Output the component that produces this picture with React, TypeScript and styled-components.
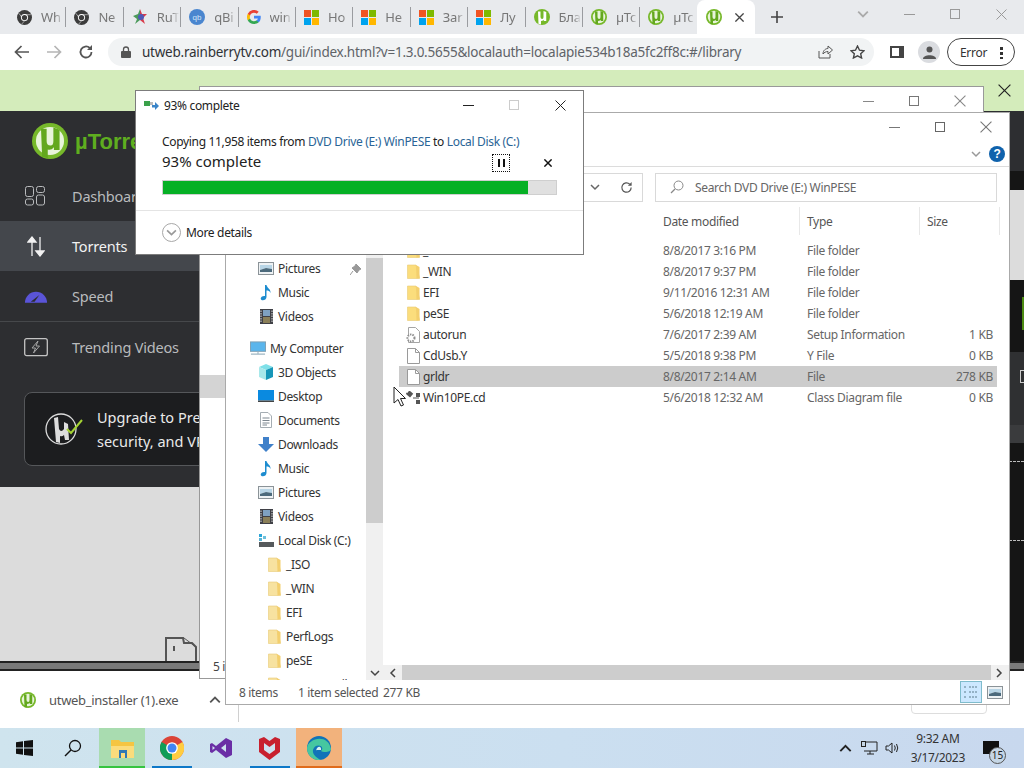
import styled, { createGlobalStyle } from 'styled-components';
import React from 'react';

const GlobalStyle = createGlobalStyle`
  html, body { margin: 0; padding: 0; background: #fff; overflow: hidden; }
  * { box-sizing: border-box; }
`;

// ---- small drawings ----

const Chrome = ({ size = 16 }: { size?: number }) => (
  <svg width={size} height={size} viewBox="0 0 16 16">
    <circle cx="8" cy="8" r="8" fill="#db4437" />
    <path d="M8 8 L15 4 A8 8 0 0 1 8 16 Z" fill="#ffcd40" />
    <path d="M8 8 L8 16 A8 8 0 0 1 1.070 4 Z" fill="#0f9d58" />
    <circle cx="8" cy="8" r="3.900" fill="#fff" />
    <circle cx="8" cy="8" r="3" fill="#4285f4" />
  </svg>
);

const GreyChrome = () => (
  <svg width="15" height="15" viewBox="0 0 16 16">
    <circle cx="8" cy="8" r="8" fill="#3c3c3c" />
    <path d="M2 3.500 L6 9 M14.800 5 H8 M5 15 L9.500 10" stroke="#aaa" strokeWidth="1" />
    <circle cx="8" cy="8" r="3.800" fill="#fff" />
    <circle cx="8" cy="8" r="2.800" fill="#3c3c3c" />
  </svg>
);

const Ms = () => (
  <svg width="15" height="15" viewBox="0 0 15 15">
    <rect width="7" height="7" fill="#f05423" />
    <rect x="8" width="7" height="7" fill="#7eb900" />
    <rect y="8" width="7" height="7" fill="#00a3ee" />
    <rect x="8" y="8" width="7" height="7" fill="#ffb700" />
  </svg>
);

const Rutor = () => (
  <svg width="16" height="16" viewBox="0 0 16 16">
    <path d="M8 0 L10 5 L15 5 L11 9 L13 15 L8 11 Z" fill="#d83a4a" />
    <path d="M8 0 L6 5 L1 7 L5 10 L3 15 L8 11 Z" fill="#4b9a5a" />
    <circle cx="9" cy="8" r="3" fill="#5058b8" />
  </svg>
);

const Qb = () => (
  <svg width="16" height="16" viewBox="0 0 16 16">
    <circle cx="8" cy="8" r="8" fill="#4a86cf" />
    <text x="8" y="11" fontSize="8" fontFamily="Liberation Sans" textAnchor="middle" fill="#d5e6f8">qb</text>
  </svg>
);

const Google = () => (
  <svg width="14" height="14" viewBox="0 0 16 16">
    <path d="M15.700 8.200c0-.6 0-1.100-.1-1.600H8v3h4.400a3.700 3.700 0 0 1-1.700 2.500v2h2.600c1.600-1.400 2.400-3.500 2.400-5.900z" fill="#4285f4" />
    <path d="M8 16c2.200 0 4-.7 5.300-1.900l-2.600-2a4.800 4.800 0 0 1-7.200-2.500H.9v2.100A8 8 0 0 0 8 16z" fill="#34a853" />
    <path d="M3.500 9.600a4.800 4.800 0 0 1 0-3.100V4.300H.9a8 8 0 0 0 0 7.400z" fill="#fbbc05" />
    <path d="M8 3.200c1.200 0 2.300.4 3.100 1.200l2.300-2.300A8 8 0 0 0 .9 4.300l2.600 2.100A4.800 4.800 0 0 1 8 3.200z" fill="#ea4335" />
  </svg>
);

const Utorrent = ({ size = 16, solid = false }: { size?: number; solid?: boolean }) => (
  <svg width={size} height={size} viewBox="0 0 32 32">
    <circle cx="16" cy="16" r="16" fill="#76b82a" />
    <circle cx="16" cy="16" r="12.500" fill={solid ? '#76b82a' : '#e8f4da'} />
    <path
      d="M8 5 L13 5 L13 16 Q13 20 16.500 20 Q19 20 19 16 L19 4 L24.500 6 L24.500 24 L19.500 24 L19.500 21.500 Q17 24.500 14 23.500 L14 31 L9 30 Z"
      fill={solid ? '#fff' : '#63a81e'}
    />
  </svg>
);

const Folder = ({ pale = false }: { pale?: boolean }) => (
  <svg width="13" height="15" viewBox="0 0 13 15">
    <path d="M0.500 1 H9 L12.500 13.500 V14.500 H0.500 Z" fill={pale ? '#f7e2a0' : '#fbdd7c'} stroke="#eacb76" strokeWidth="0.6" />
    <path d="M9 1 L12.500 3 V14 L9.500 14.500 Z" fill="#f3cf6e" />
  </svg>
);

const DocFile = () => (
  <svg width="13" height="16" viewBox="0 0 13 16">
    <path d="M0.500 0.500 H8.500 L12.500 4.500 V15.500 H0.500 Z" fill="#fff" stroke="#9a9a9a" />
    <path d="M8.500 0.500 V4.500 H12.500" fill="none" stroke="#9a9a9a" />
  </svg>
);

const SetupFile = () => (
  <svg width="16" height="16" viewBox="0 0 16 16">
    <path d="M3.500 0.500 H10.500 L14.500 4.500 V15.500 H3.500 Z" fill="#fff" stroke="#a5a5a5" />
    <circle cx="6" cy="11" r="3.500" fill="#fff" stroke="#8f8f8f" strokeWidth="2" strokeDasharray="1.500 1" />
  </svg>
);

const ClassFile = () => (
  <svg width="20" height="14" viewBox="0 0 20 14">
    <path d="M3 2 L8 5 M10 7 H16" stroke="#555" strokeWidth="1" />
    <rect x="4" y="0" width="5" height="5" fill="#555" transform="rotate(40 6 3)" />
    <rect x="13" y="2" width="4" height="4" fill="#555" />
    <rect x="13" y="9" width="4" height="4" fill="#555" />
  </svg>
);

const PicturesIcon = () => (
  <svg width="16" height="13" viewBox="0 0 16 13">
    <rect x="0.500" y="0.500" width="15" height="12" fill="#eef2f4" stroke="#8b9398" />
    <path d="M2 3 H14 V7 L8 6 L2 8 Z" fill="#b8d5e6" />
    <path d="M2 8 L8 6 L14 7 V10 H2 Z" fill="#4c6a7c" />
  </svg>
);

const MusicIcon = () => (
  <svg width="12" height="17" viewBox="0 0 12 17">
    <path d="M5 1 H6.500 C7 4 11 5 10.500 9 C10 7 8 6.500 6.500 6.500 V13 C6.500 15.500 3.500 17 1.500 16 C-.5 14.500 1.500 11.500 5 12 Z" fill="#1d8ccf" />
  </svg>
);

const VideosIcon = () => (
  <svg width="13" height="15" viewBox="0 0 13 15">
    <rect width="13" height="15" fill="#3f4046" />
    <rect x="3" y="1" width="7" height="6" fill="#7fa1c0" />
    <rect x="3" y="8" width="7" height="6" fill="#8a7f58" />
    <path d="M1 1.500 V14 M12 1.500 V14" stroke="#ddd" strokeDasharray="1.500 1" />
  </svg>
);

const ComputerIcon = () => (
  <svg width="17" height="15" viewBox="0 0 17 15">
    <rect x="0.500" y="0.500" width="16" height="10" fill="#5ab5ec" stroke="#7f9fb2" />
    <path d="M1 13.500 H16 M8.500 11 V13" stroke="#9fb7c4" strokeWidth="1.200" />
  </svg>
);

const CubeIcon = () => (
  <svg width="16" height="16" viewBox="0 0 16 16">
    <path d="M8 0 L15 3 L8 6 L1 3 Z" fill="#7fe0e8" />
    <path d="M1 3 L8 6 V16 L1 13 Z" fill="#a8e8ea" />
    <path d="M15 3 L8 6 V16 L15 13 Z" fill="#1796b8" />
  </svg>
);

const DesktopIcon = () => (
  <svg width="16" height="12" viewBox="0 0 16 12">
    <rect width="16" height="10.500" fill="#0a8ae0" />
    <rect y="10.500" width="16" height="1.500" fill="#444" />
  </svg>
);

const DocsIcon = () => (
  <svg width="12" height="16" viewBox="0 0 12 16">
    <path d="M.5 .5 H8 L11.500 4 V15.500 H.5 Z" fill="#fff" stroke="#a5adb3" />
    <path d="M2.500 6 H9.500 M2.500 8.500 H9.500 M2.500 11 H9.500 M2.500 13 H7" stroke="#7d8790" />
  </svg>
);

const DownIcon = () => (
  <svg width="16" height="15" viewBox="0 0 16 15">
    <path d="M5 0 H11 V7 H16 L8 15 L0 7 H5 Z" fill="#3f80c9" />
  </svg>
);

const DiskIcon = () => (
  <svg width="16" height="13" viewBox="0 0 16 13">
    <rect x="1" y="8" width="15" height="5" fill="#55595c" />
    <rect x="1" y="0" width="3" height="3" fill="#2ca6d8" />
    <rect x="5" y="2" width="3" height="3" fill="#6cc0dc" />
    <rect x="1" y="4" width="3" height="3" fill="#56b4d6" />
  </svg>
);

const CloseX = ({ size = 11, color = '#333', width = 1 }: { size?: number; color?: string; width?: number }) => (
  <svg width={size} height={size} viewBox="0 0 11 11">
    <path d="M.5 .5 L10.500 10.500 M10.500 .5 L.5 10.500" stroke={color} strokeWidth={width} />
  </svg>
);

const Chevron = ({ dir, color = '#444', size = 10 }: { dir: 'up' | 'down' | 'left' | 'right'; color?: string; size?: number }) => {
  const d = { up: 'M1 7 L5 3 L9 7', down: 'M1 3 L5 7 L9 3', left: 'M7 1 L3 5 L7 9', right: 'M3 1 L7 5 L3 9' }[dir];
  return (
    <svg width={size} height={size} viewBox="0 0 10 10">
      <path d={d} fill="none" stroke={color} strokeWidth="1.500" />
    </svg>
  );
};

const MinLine = styled.span<{ $color?: string }>`
  display: block;
  width: 11px;
  height: 1px;
  background: ${p => p.$color || '#333'};
`;

const MaxBox = styled.span<{ $color?: string }>`
  display: block;
  width: 10px;
  height: 10px;
  border: 1px solid ${p => p.$color || '#555'};
`;

// ---- browser chrome ----

const Screen = styled.div`
  position: relative;
  width: 1024px;
  height: 768px;
  display: flex;
  flex-direction: column;
  overflow: hidden;
  font-family: 'Noto Sans', 'Open Sans', sans-serif;
  color: #222;
`;

const TabStrip = styled.div`
  flex: none;
  height: 34px;
  background: #e8eaed;
  display: flex;
  align-items: stretch;
  padding-left: 9px;
`;

const Tab = styled.div<{ $active?: boolean }>`
  flex: none;
  width: ${p => (p.$active ? 58 : 56.4)}px;
  height: 34px;
  display: flex;
  align-items: center;
  gap: ${p => (p.$active ? 13 : 9)}px;
  padding-left: ${p => (p.$active ? 9 : 8)}px;
  font-size: 13px;
  color: #777;
  overflow: hidden;
  white-space: nowrap;
  background: ${p => (p.$active ? '#fff' : 'transparent')};
  border-radius: ${p => (p.$active ? '8px 8px 0 0' : '0')};
`;

const TabLabel = styled.span`
  width: 22px;
  overflow: hidden;
  letter-spacing: -0.2px;
  -webkit-mask-image: linear-gradient(90deg, #000 65%, transparent);
  mask-image: linear-gradient(90deg, #000 65%, transparent);
`;

const TabDivider = styled.i`
  flex: none;
  width: 1px;
  height: 20px;
  margin-top: 7px;
  background: #9a9ca0;
`;

const NewTab = styled.div`
  width: 32px;
  margin-left: 6px;
  display: flex;
  align-items: center;
  justify-content: center;
`;

const WinControls = styled.div`
  margin-left: auto;
  display: flex;
  height: 28px;
`;

const WinBtn = styled.div`
  width: 46px;
  display: flex;
  align-items: center;
  justify-content: center;
`;

const AddressRow = styled.div`
  flex: none;
  height: 36px;
  background: #fff;
  display: flex;
  align-items: center;
  padding-left: 14px;
`;

const NavBtns = styled.div`
  display: flex;
  align-items: center;
  gap: 16px;
  margin-right: 14px;
`;

const Omnibox = styled.div`
  flex: none;
  width: 766px;
  height: 28px;
  border-radius: 14px;
  background: #f1f3f4;
  display: flex;
  align-items: center;
  padding: 0 9px 0 13px;
  font-size: 13.5px;
  letter-spacing: -0.24px;
  color: #5f6368;
  white-space: nowrap;
  b { font-weight: 400; color: #303236; }
`;

const LockWrap = styled.span`
  display: flex;
  margin-right: 11px;
`;

const OmniIcons = styled.div`
  margin-left: auto;
  display: flex;
  gap: 17px;
  align-items: center;
`;

const SideIcons = styled.div`
  display: flex;
  align-items: center;
  margin-left: 16px;
  gap: 14px;
`;

const Avatar = styled.div`
  width: 22px;
  height: 22px;
  border-radius: 50%;
  background: #dadce0;
  display: flex;
  align-items: center;
  justify-content: center;
`;

const ErrorPill = styled.div`
  width: 68px;
  height: 28px;
  margin-left: -7px;
  border: 1px solid #444;
  border-radius: 14px;
  font-size: 12px;
  letter-spacing: -0.3px;
  color: #333;
  display: flex;
  align-items: center;
  justify-content: space-between;
  padding: 0 11px 0 12px;
`;

const Kebab = styled.span`
  width: 3px;
  height: 13px;
  background: radial-gradient(circle, #333 1.5px, transparent 1.7px) 0 0 / 3px 5px repeat-y;
`;

// ---- web page behind the windows ----

const Page = styled.div`
  flex: 1;
  min-height: 0;
  display: flex;
  flex-direction: column;
`;

const Banner = styled.div`
  flex: none;
  height: 41px;
  background: #d4ecbb;
  display: flex;
  align-items: center;
  padding: 0 13px 0 226px;
  font-size: 14.5px;
  color: #222;
  white-space: nowrap;
  gap: 10px;
  b { font-weight: 700; }
`;

const BannerClose = styled.span`
  margin-left: auto;
  display: flex;
`;

const PageBody = styled.div`
  flex: 1;
  min-height: 0;
  display: flex;
`;

const LeftCol = styled.div`
  flex: 1;
  min-width: 0;
  display: flex;
  flex-direction: column;
`;

const AppBody = styled.div`
  flex: none;
  height: 376px;
  background: #2d2e31;
  display: flex;
  flex-direction: column;
`;

const LeftBottom = styled.div`
  flex: 1;
  background: #dcdcdc;
  display: flex;
  align-items: flex-end;
  padding-left: 165px;
`;

const RightStrip = styled.div`
  flex: none;
  width: 40px;
  display: flex;
  flex-direction: column;
`;

const Band = styled.div<{ $h?: number; $bg: string }>`
  position: relative;
  flex: ${p => (p.$h ? `none` : '1')};
  height: ${p => (p.$h ? `${p.$h}px` : 'auto')};
  background: ${p => p.$bg};
`;

const GreenMark = styled.span`
  position: absolute;
  left: 38px;
  top: 17px;
  width: 2px;
  height: 33px;
  background: #4c8a12;
`;

const SquareMark = styled.span`
  position: absolute;
  left: 36px;
  top: 18px;
  width: 6px;
  height: 13px;
  border: 1px solid #ccc;
`;

const DashMark = styled.span<{ $top: number }>`
  position: absolute;
  left: 25px;
  right: 0;
  top: ${p => p.$top}px;
  border-top: 1px dashed #bbb;
`;

const Brand = styled.div`
  height: 60px;
  padding: 12px 0 0 32px;
  display: flex;
  align-items: flex-start;
  gap: 7px;
  font-family: 'Liberation Sans', sans-serif;
  font-weight: 700;
  font-size: 22px;
  color: #5fae1f;
  line-height: 37px;
`;

const NavItem = styled.div<{ $active?: boolean; $rule?: boolean }>`
  flex: none;
  height: ${p => (p.$rule ? 51 : 50)}px;
  display: flex;
  align-items: center;
  padding-left: 24px;
  gap: 24px;
  font-size: 14.5px;
  letter-spacing: -0.2px;
  color: ${p => (p.$active ? '#f2f2f2' : '#b9bbbd')};
  background: ${p => (p.$active ? '#44474c' : 'transparent')};
  border-bottom: ${p => (p.$rule ? '1px solid #46484b' : 'none')};
  white-space: nowrap;
`;

const NavIcon = styled.span`
  width: 24px;
  display: flex;
  justify-content: center;
`;

const Upsell = styled.div`
  margin: 20px 0 0 24px;
  height: 74px;
  width: 300px;
  background: #1c1d1f;
  border: 1px solid #55575a;
  border-radius: 8px;
  display: flex;
  align-items: center;
  gap: 14px;
  padding: 0 0 1px 20px;
  font-size: 14.5px;
  line-height: 24px;
  color: #eaeaea;
  white-space: nowrap;
`;

const HScroll = styled.div`
  flex: none;
  height: 10px;
  background: #7a7a7a;
  border-top: 2px solid #222;
  border-bottom: 2px solid #222;
`;

const DownloadBar = styled.div`
  flex: none;
  height: 57px;
  background: #fff;
  display: flex;
  align-items: center;
  padding-left: 20px;
  font-size: 13px;
  letter-spacing: -0.3px;
  color: #555;
`;

const DlIcon = styled.span`
  display: flex;
  margin-right: 13px;
`;

const DlChevron = styled.span`
  display: flex;
  margin-left: 31px;
`;

const DlRule = styled.i`
  align-self: stretch;
  width: 1px;
  margin: 0 0 6px 17px;
  background: #d0d0d0;
`;

const ShowAll = styled.div`
  margin-left: auto;
  margin-right: 37px;
  width: 76px;
  height: 28px;
  border: 1px solid #ddd;
  border-radius: 4px;
`;

// ---- taskbar ----

const Taskbar = styled.div`
  flex: none;
  height: 40px;
  background: linear-gradient(90deg, #cfe4ee, #cbdff0 55%, #c8d8ee);
  display: flex;
  align-items: stretch;
  padding-left: 1px;
  gap: 3.2px;
`;

const TaskBtn = styled.div<{ $bg?: string; $under?: string; $inset?: number }>`
  position: relative;
  width: 46px;
  display: flex;
  align-items: center;
  justify-content: center;
  background: ${p => p.$bg || 'transparent'};
  &::after {
    content: '';
    position: absolute;
    left: ${p => p.$inset || 0}px;
    right: ${p => p.$inset || 0}px;
    bottom: 0;
    height: 2px;
    background: ${p => p.$under || 'transparent'};
  }
`;

const Tray = styled.div`
  margin-left: auto;
  display: flex;
  align-items: center;
  padding-right: 25px;
`;

const TrayIcon = styled.span<{ $gap: number }>`
  display: flex;
  margin-right: ${p => p.$gap}px;
`;

const Clock = styled.div`
  font-size: 12px;
  letter-spacing: -0.3px;
  line-height: 19px;
  text-align: center;
  color: #333;
  margin: 0 18px 0 11px;
  white-space: nowrap;
`;

const Notify = styled.div`
  position: relative;
  width: 16px;
  height: 13px;
  margin-bottom: 2px;
  background: #111;
  span {
    position: absolute;
    left: 6px;
    top: 6px;
    width: 17px;
    height: 17px;
    border-radius: 50%;
    border: 1px solid #555;
    background: #c5d6e6;
    font-size: 10px;
    line-height: 15px;
    text-align: center;
    color: #222;
  }
`;

// ---- windows ----

const Win = styled.div<{ $l: number; $t: number; $w: number; $h: number; $z: number; $line?: string }>`
  position: absolute;
  left: ${p => p.$l}px;
  top: ${p => p.$t}px;
  width: ${p => p.$w}px;
  height: ${p => p.$h}px;
  z-index: ${p => p.$z};
  background: #fff;
  border: 1px solid ${p => p.$line || '#7c7c7c'};
  display: flex;
  flex-direction: column;
  letter-spacing: -0.33px;
`;

const TitleBar = styled.div<{ $h: number }>`
  flex: none;
  height: ${p => p.$h}px;
  display: flex;
  align-items: center;
  padding-left: 8px;
  font-size: 12px;
  gap: 5px;
`;

const TitleBtns = styled.div`
  margin-left: auto;
  display: flex;
`;

const TitleBtn = styled.div`
  width: 46px;
  display: flex;
  align-items: center;
  justify-content: center;
`;

const BackSelected = styled.div`
  flex: none;
  height: 23px;
  margin-top: 260px;
  background: #d4d4d4;
`;

const BackFoot = styled.div`
  margin-top: auto;
  font-size: 12px;
  color: #444;
  padding: 0 0 3px 13px;
`;

const CopyBody = styled.div`
  flex: none;
  padding: 3px 26px 0;
  height: 92px;
  border-bottom: 1px solid #e4e4e4;
`;

const CopyLine = styled.div`
  font-size: 12px;
  line-height: 17px;
  margin-top: 11px;
  color: #222;
  white-space: nowrap;
  a { color: #2a6496; }
`;

const CopyHead = styled.div`
  display: flex;
  align-items: center;
  height: 22px;
  margin-top: 2px;
  padding-right: 5px;
  letter-spacing: 0;
`;

const CopyPct = styled.span`
  align-self: flex-start;
  font-size: 15px;
  line-height: 18px;
  color: #222;
`;

const PauseBtn = styled.div`
  margin-left: auto;
  width: 18px;
  height: 18px;
  border: 1px dotted #111;
  display: flex;
  align-items: center;
  justify-content: center;
  gap: 3px;
  margin-right: 34px;
  i { width: 2px; height: 8px; background: #111; }
`;

const Progress = styled.div`
  margin-top: 6px;
  height: 15px;
  width: 395px;
  background: #e0e0e0;
  border: 1px solid #cfcfcf;
`;

const ProgressFill = styled.div`
  height: 100%;
  background: #06b025;
`;

const Details = styled.div`
  flex: 1;
  display: flex;
  align-items: center;
  gap: 5px;
  padding-left: 26px;
  font-size: 12px;
  color: #222;
`;

const ChevronRound = styled.span`
  width: 19px;
  height: 19px;
  border-radius: 50%;
  border: 1px solid #a8a8a8;
  display: flex;
  align-items: center;
  justify-content: center;
`;

// explorer

const Ribbon = styled.div`
  flex: none;
  height: 26px;
  display: flex;
  align-items: center;
  justify-content: flex-end;
  padding: 1px 4px 0 0;
  gap: 8px;
  border-bottom: 1px solid #dcdcdc;
`;

const Help = styled.span`
  width: 16px;
  height: 16px;
  border-radius: 50%;
  background: #0f62ac;
  color: #fff;
  font: 700 12px/16px 'Liberation Sans', sans-serif;
  text-align: center;
`;

const SearchRow = styled.div`
  flex: none;
  height: 40px;
  display: flex;
  align-items: center;
  justify-content: flex-end;
  padding-right: 12px;
  gap: 12px;
`;

const PathEnd = styled.div`
  width: 72px;
  height: 29px;
  border: 1px solid #d9d9d9;
  border-left: none;
  display: flex;
  align-items: center;
  justify-content: flex-end;
  gap: 20px;
  padding-right: 9px;
`;

const SearchBox = styled.div`
  width: 342px;
  height: 29px;
  border: 1px solid #d9d9d9;
  display: flex;
  align-items: center;
  gap: 11px;
  padding-left: 14px;
  font-size: 12px;
  color: #666;
`;

const ExplorerBody = styled.div`
  flex: 1;
  min-height: 0;
  display: flex;
`;

const TreePane = styled.div`
  flex: none;
  width: 140px;
  position: relative;
  overflow: hidden;
  display: flex;
  flex-direction: column;
  padding-top: 49px;
`;

const TreeRow = styled.div<{ $indent: number }>`
  flex: none;
  height: 24px;
  display: flex;
  align-items: center;
  padding-left: ${p => p.$indent}px;
  font-size: 12px;
  color: #333;
  white-space: nowrap;
`;

const TreeIcon = styled.span`
  width: 16px;
  flex: none;
  display: flex;
  align-items: center;
  justify-content: center;
  margin-right: 4px;
`;

const TreeSpacer = styled.div`
  flex: none;
  height: 8px;
`;

const Pin = styled.span`
  position: absolute;
  right: 5px;
  top: 51px;
`;

const VScroll = styled.div`
  flex: none;
  width: 17px;
  background: #f0f0f0;
  display: flex;
  flex-direction: column;
  justify-content: space-between;
  align-items: center;
  padding-bottom: 2px;
`;

const VThumb = styled.div`
  width: 100%;
  height: 265px;
  margin-top: 51px;
  background: #cdcdcd;
`;

const ListPane = styled.div`
  flex: 1;
  min-width: 0;
  display: flex;
  flex-direction: column;
`;

const ColHead = styled.div`
  flex: none;
  height: 28px;
  display: grid;
  grid-template-columns: 273px 144px 120px 80px;
  font-size: 12px;
  color: #555;
  align-items: stretch;
  span {
    display: flex;
    align-items: center;
    padding-left: 7px;
    border-right: 1px solid #e8e8e8;
  }
  span:first-child { border-right: none; }
`;

const FileList = styled.div`
  flex: 1;
  min-height: 0;
  padding: 5px 0 0 16px;
`;

const FileRow = styled.div<{ $sel?: boolean }>`
  width: 598px;
  height: 21px;
  display: grid;
  grid-template-columns: 24px 240px 144px 120px 1fr;
  align-items: center;
  font-size: 12px;
  color: #666;
  background: ${p => (p.$sel ? '#cccccc' : 'transparent')};
  white-space: nowrap;
`;

const RowIcon = styled.span`
  display: flex;
  justify-content: center;
  padding-left: 4px;
`;

const FileName = styled.span`
  color: #333;
`;

const FileSize = styled.span`
  text-align: right;
  padding-right: 4px;
`;

const HScrollBar = styled.div`
  flex: none;
  height: 15px;
  background: #f0f0f0;
  display: flex;
  align-items: center;
  justify-content: space-between;
  padding: 0 5px;
  position: relative;
`;

const HThumb = styled.div`
  position: absolute;
  left: 19px;
  right: 18px;
  top: 0;
  bottom: 0;
  background: #cdcdcd;
`;

const Status = styled.div`
  flex: none;
  height: 24px;
  display: flex;
  align-items: center;
  padding: 0 3px 0 13px;
  font-size: 12px;
  color: #555;
  white-space: nowrap;
`;

const StatusPart = styled.span<{ $w: number }>`
  flex: none;
  width: ${p => p.$w}px;
`;

const ViewBtns = styled.div`
  margin-left: auto;
  display: flex;
  align-items: center;
  gap: 2px;
`;

const ViewBtn = styled.span<{ $on?: boolean }>`
  width: 22px;
  height: 22px;
  display: flex;
  align-items: center;
  justify-content: center;
  background: ${p => (p.$on ? '#cce8ff' : 'transparent')};
  border: 1px solid ${p => (p.$on ? '#7fbccc' : 'transparent')};
`;

const Cursor = styled.svg`
  position: absolute;
  left: 393px;
  top: 386px;
  z-index: 9;
`;

const tabs = [
  { icon: <GreyChrome />, label: 'Wh' },
  { icon: <GreyChrome />, label: 'Ne' },
  { icon: <Rutor />, label: 'RuT' },
  { icon: <Qb />, label: 'qBi' },
  { icon: <Google />, label: 'win' },
  { icon: <Ms />, label: 'Ho' },
  { icon: <Ms />, label: 'He' },
  { icon: <Ms />, label: 'Зar' },
  { icon: <Ms />, label: 'Лу' },
  { icon: <Utorrent solid />, label: 'Бла' },
  { icon: <Utorrent />, label: 'µTc' },
  { icon: <Utorrent />, label: 'µTc' },
];

const tree = [
  { name: 'Pictures', icon: <PicturesIcon />, indent: 32 },
  { name: 'Music', icon: <MusicIcon />, indent: 32 },
  { name: 'Videos', icon: <VideosIcon />, indent: 32 },
  null,
  { name: 'My Computer', icon: <ComputerIcon />, indent: 24 },
  { name: '3D Objects', icon: <CubeIcon />, indent: 32 },
  { name: 'Desktop', icon: <DesktopIcon />, indent: 32 },
  { name: 'Documents', icon: <DocsIcon />, indent: 32 },
  { name: 'Downloads', icon: <DownIcon />, indent: 32 },
  { name: 'Music', icon: <MusicIcon />, indent: 32 },
  { name: 'Pictures', icon: <PicturesIcon />, indent: 32 },
  { name: 'Videos', icon: <VideosIcon />, indent: 32 },
  { name: 'Local Disk (C:)', icon: <DiskIcon />, indent: 32 },
  { name: '_ISO', icon: <Folder pale />, indent: 40 },
  { name: '_WIN', icon: <Folder pale />, indent: 40 },
  { name: 'EFI', icon: <Folder pale />, indent: 40 },
  { name: 'PerfLogs', icon: <Folder pale />, indent: 40 },
  { name: 'peSE', icon: <Folder pale />, indent: 40 },
  { name: 'Program Files', icon: <Folder pale />, indent: 40 },
];

const files = [
  { name: '_ISO', date: '8/8/2017 3:16 PM', type: 'File folder', size: '', icon: <Folder /> },
  { name: '_WIN', date: '8/8/2017 9:37 PM', type: 'File folder', size: '', icon: <Folder /> },
  { name: 'EFI', date: '9/11/2016 12:31 AM', type: 'File folder', size: '', icon: <Folder /> },
  { name: 'peSE', date: '5/6/2018 12:19 AM', type: 'File folder', size: '', icon: <Folder /> },
  { name: 'autorun', date: '7/6/2017 2:39 AM', type: 'Setup Information', size: '1 KB', icon: <SetupFile /> },
  { name: 'CdUsb.Y', date: '5/5/2018 9:38 PM', type: 'Y File', size: '0 KB', icon: <DocFile /> },
  { name: 'grldr', date: '8/8/2017 2:14 AM', type: 'File', size: '278 KB', icon: <DocFile />, sel: true },
  { name: 'Win10PE.cd', date: '5/6/2018 12:32 AM', type: 'Class Diagram file', size: '0 KB', icon: <ClassFile /> },
];

const App = () => (
  <Screen>
    <GlobalStyle />
    <TabStrip>
      {tabs.map((t, i) => (
        <React.Fragment key={i}>
          <Tab>{t.icon}<TabLabel>{t.label}</TabLabel></Tab>
          {i < tabs.length - 1 && <TabDivider />}
        </React.Fragment>
      ))}
      <Tab $active>
        <Utorrent />
        <CloseX size={9} color="#444" width={1.6} />
      </Tab>
      <NewTab>
        <svg width="12" height="12" viewBox="0 0 12 12"><path d="M6 0 V12 M0 6 H12" stroke="#444" strokeWidth="1.6" /></svg>
      </NewTab>
      <WinControls>
        <WinBtn><Chevron dir="down" color="#aaa" size={12} /></WinBtn>
        <WinBtn><MinLine $color="#999" /></WinBtn>
        <WinBtn><MaxBox $color="#999" /></WinBtn>
        <WinBtn><CloseX color="#999" /></WinBtn>
      </WinControls>
    </TabStrip>

    <AddressRow>
      <NavBtns>
        <svg width="16" height="14" viewBox="0 0 16 14"><path d="M15 7 H2 M7.500 1 L1.500 7 L7.500 13" fill="none" stroke="#555" strokeWidth="1.7" /></svg>
        <svg width="16" height="14" viewBox="0 0 16 14"><path d="M1 7 H14 M8.500 1 L14.500 7 L8.500 13" fill="none" stroke="#b5b5b5" strokeWidth="1.7" /></svg>
        <svg width="16" height="16" viewBox="0 0 16 16"><path d="M13.500 8 A5.500 5.500 0 1 1 11.800 4" fill="none" stroke="#555" strokeWidth="1.8" /><path d="M14 1 V6 H9 Z" fill="#555" /></svg>
      </NavBtns>
      <Omnibox>
        <LockWrap>
          <svg width="10" height="12" viewBox="0 0 10 12"><rect y="5" width="10" height="7" rx="1" fill="#555" /><path d="M2.500 5 V3.500 A2.500 2.500 0 0 1 7.500 3.500 V5" fill="none" stroke="#555" strokeWidth="1.3" /></svg>
        </LockWrap>
        <span><b>utweb.rainberrytv.com</b>/gui/index.html?v=1.3.0.5655&amp;localauth=localapie534b18a5fc2ff8c:#/library</span>
        <OmniIcons>
          <svg width="15" height="14" viewBox="0 0 15 14"><path d="M1 6 V13 H12 V9 M5 9 C5 5 8 3.500 10 3.500 V1 L14.500 5 L10 9 V6.500 C8 6.500 6 7.500 5 9 Z" fill="none" stroke="#555" /></svg>
          <svg width="15" height="14" viewBox="0 0 15 14"><path d="M7.500 1 L9.500 5.200 L14 5.800 L10.700 8.800 L11.600 13 L7.500 10.900 L3.400 13 L4.300 8.800 L1 5.800 L5.500 5.200 Z" fill="none" stroke="#444" strokeWidth="1.4" /></svg>
        </OmniIcons>
      </Omnibox>
      <SideIcons>
        <svg width="14" height="12" viewBox="0 0 14 12"><rect x="1" y="1" width="12" height="10" fill="none" stroke="#444" strokeWidth="2" /><rect x="9" y="1" width="4" height="10" fill="#444" /></svg>
        <Avatar>
          <svg width="13" height="13" viewBox="0 0 13 13"><circle cx="6.500" cy="3.500" r="3" fill="#555" /><path d="M0 13 C0 8 13 8 13 13 Z" fill="#555" /></svg>
        </Avatar>
        <ErrorPill>Error<Kebab /></ErrorPill>
      </SideIcons>
    </AddressRow>

    <Page>
      <Banner>
        <svg width="10" height="10" viewBox="0 0 10 10"><circle cx="5" cy="5" r="5" fill="#222" /></svg>
        <span>Help us decide which new features to build next on the <b>Telegram</b></span>
        <BannerClose><CloseX size={13} color="#222" /></BannerClose>
      </Banner>
      <PageBody>
        <LeftCol>
          <AppBody>
            <Brand>
              <Utorrent size={36} />
              µTorrent
            </Brand>
            <NavItem>
              <NavIcon>
                <svg width="22" height="20" viewBox="0 0 22 20"><g fill="none" stroke="#b9bbbd"><rect x=".5" y=".5" width="8" height="10" rx="2" /><rect x="11.500" y=".5" width="8" height="6" rx="2" /><rect x=".5" y="13" width="8" height="6" rx="2" /><rect x="11.500" y="9" width="8" height="10" rx="2" /></g></svg>
              </NavIcon>
              Dashboard
            </NavItem>
            <NavItem $active>
              <NavIcon>
                <svg width="18" height="21" viewBox="0 0 18 21"><path d="M5 20 V4 M1 6 L5 1 L9 6 Z M13 1 V17 M9 15 L13 20 L17 15 Z" fill="#f2f2f2" stroke="#f2f2f2" strokeWidth="1.3" /></svg>
              </NavIcon>
              Torrents
            </NavItem>
            <NavItem $rule>
              <NavIcon>
                <svg width="25" height="14" viewBox="0 0 25 14"><path d="M1 14 A11.500 11.500 0 0 1 24 14 Z" fill="#5a54d8" /><path d="M7 13 L16 6 L11 13 Z" fill="#2d2e31" /></svg>
              </NavIcon>
              Speed
            </NavItem>
            <NavItem>
              <NavIcon>
                <svg width="24" height="19" viewBox="0 0 24 19"><rect x=".7" y=".7" width="22.6" height="17" rx="2" fill="none" stroke="#c4c4c4" strokeWidth="1.3" /><path d="M14 3 L8 10 H11.500 L9.500 15 L15.500 8 H12 Z" fill="none" stroke="#a5a5a5" /></svg>
              </NavIcon>
              Trending Videos
            </NavItem>
            <Upsell>
              <svg width="38" height="34" viewBox="0 0 38 34">
                <circle cx="16" cy="17" r="15" fill="none" stroke="#ddd" strokeWidth="1.3" />
                <path d="M9 6 L13 5 L14 17 Q16 21 19 17 L19 10 L23 12 L24 28 H20 L19 23 Q17 25 15 24 L15 31 L11 30 Z" fill="#ddd" />
                <path d="M22 17 L26 21 L37 8" fill="none" stroke="#a4d233" strokeWidth="2" />
              </svg>
              <div>Upgrade to Premium<br />security, and VPN</div>
            </Upsell>
          </AppBody>
          <LeftBottom>
            <svg width="32" height="24" viewBox="0 0 32 24">
              <path d="M1 24 V1 H18 L19 6 H27 L31 10 V24" fill="none" stroke="#555" strokeWidth="2" />
              <rect x="8" y="9" width="2" height="5" fill="#555" />
              <path d="M19 1 L31 10" stroke="#555" strokeWidth="1" />
            </svg>
          </LeftBottom>
        </LeftCol>
        <RightStrip>
          <Band $h={60} $bg="#2d2e31" />
          <Band $h={19} $bg="#151515" />
          <Band $h={90} $bg="#dcdcdc" />
          <Band $h={72} $bg="#151515"><GreenMark /></Band>
          <Band $h={73} $bg="#2f3032"><SquareMark /></Band>
          <Band $h={18} $bg="#3a3b3d" />
          <Band $bg="#151515">
            <DashMark $top={18} />
            <DashMark $top={97} />
          </Band>
        </RightStrip>
      </PageBody>
      <HScroll />
    </Page>

    <DownloadBar>
      <DlIcon><Utorrent size={16} /></DlIcon>
      utweb_installer (1).exe
      <DlChevron><Chevron dir="up" color="#555" size={12} /></DlChevron>
      <DlRule />
      <ShowAll />
    </DownloadBar>

    <Taskbar>
      <TaskBtn>
        <svg width="17" height="16" viewBox="0 0 17 16"><path d="M0 2.300 L7 1.300 V7.500 H0 Z M8 1.100 L17 0 V7.500 H8 Z M0 8.500 H7 V14.700 L0 13.700 Z M8 8.500 H17 V16 L8 14.900 Z" fill="#111" /></svg>
      </TaskBtn>
      <TaskBtn>
        <svg width="18" height="18" viewBox="0 0 18 18"><circle cx="11" cy="7" r="5.500" fill="none" stroke="#111" strokeWidth="1.3" /><path d="M7 11 L1 17" stroke="#111" strokeWidth="1.5" /></svg>
      </TaskBtn>
      <TaskBtn $bg="#a9dcb0" $under="#36c43f">
        <svg width="23" height="19" viewBox="0 0 23 19"><path d="M0 1 H8 L10 3 H23 V19 H0 Z" fill="#f5c542" /><rect x="0" y="7" width="23" height="12" fill="#fbdc7c" /><rect x="8" y="11" width="8" height="8" fill="#3179b5" /><rect x="10" y="14" width="4" height="5" fill="#fbdc7c" /></svg>
      </TaskBtn>
      <TaskBtn $under="#0d78c8" $inset={3}>
        <Chrome size={24} />
      </TaskBtn>
      <TaskBtn>
        <svg width="22" height="22" viewBox="0 0 22 22"><path d="M16 1 L22 4 V18 L16 21 L6 13 L2 16 L0 15 V7 L2 6 L6 9 Z M16 7 L11 11 L16 15 Z M2.500 9 V13 L5 11 Z" fill="#6a2ea5" fillRule="evenodd" /></svg>
      </TaskBtn>
      <TaskBtn $under="#0d78c8" $inset={3}>
        <svg width="21" height="23" viewBox="0 0 21 23"><path d="M0 2 L5 0 L10.500 4 L16 0 L21 2 V15 L10.500 23 L0 15 Z M5 6 V13 L10.500 17 L16 13 V6 L10.500 10 Z" fill="#c8202e" fillRule="evenodd" /></svg>
      </TaskBtn>
      <TaskBtn $bg="#f2b27c" $under="#e06c1c">
        <svg width="24" height="24" viewBox="0 0 24 24">
          <circle cx="12" cy="12" r="12" fill="#1173b8" />
          <path d="M0 12 C1 2 21 -3 24 13 C24 16 17 17 14 15 C19 10 8 6 6 14 C5 19 11 23 14 24 C6 25 0 19 0 12 Z" fill="#46c7a0" />
          <path d="M9 15 C10 9 15 10 14 14 H9" fill="#d9f2f0" />
        </svg>
      </TaskBtn>
      <Tray>
        <TrayIcon $gap={9}><Chevron dir="up" color="#222" size={13} /></TrayIcon>
        <TrayIcon $gap={7}>
          <svg width="17" height="14" viewBox="0 0 17 14"><path d="M3 4 V1 H16 V10 H3 M9 10 V13 M6 13 H13" fill="none" stroke="#222" /><rect x=".5" y=".5" width="4" height="5" fill="#c5d6e6" stroke="#222" /></svg>
        </TrayIcon>
        <TrayIcon $gap={0}>
          <svg width="15" height="14" viewBox="0 0 15 14"><path d="M1 5 H3.500 L7 2 V12 L3.500 9 H1 Z M9.500 4.500 Q11 7 9.500 9.500 M11.500 3 Q14 7 11.500 11" fill="none" stroke="#222" /></svg>
        </TrayIcon>
        <Clock>9:32 AM<br />3/17/2023</Clock>
        <Notify><span>15</span></Notify>
      </Tray>
    </Taskbar>

    {/* back explorer window, mostly covered */}
    <Win $l={199} $t={86} $w={785} $h={593} $z={1} $line="#999">
      <TitleBar $h={28}>
        <TitleBtns>
          <TitleBtn><MinLine $color="#888" /></TitleBtn>
          <TitleBtn><MaxBox $color="#777" /></TitleBtn>
          <TitleBtn><CloseX color="#888" size={12} /></TitleBtn>
        </TitleBtns>
      </TitleBar>
      <BackSelected />
      <BackFoot>5 items</BackFoot>
    </Win>

    {/* front explorer window */}
    <Win $l={225} $t={112} $w={785} $h={593} $z={2} $line="#aaa">
      <TitleBar $h={28}>
        <TitleBtns>
          <TitleBtn><MinLine $color="#777" /></TitleBtn>
          <TitleBtn><MaxBox $color="#666" /></TitleBtn>
          <TitleBtn><CloseX color="#777" size={12} /></TitleBtn>
        </TitleBtns>
      </TitleBar>
      <Ribbon>
        <Chevron dir="down" color="#999" size={10} />
        <Help>?</Help>
      </Ribbon>
      <SearchRow>
        <PathEnd>
          <Chevron dir="down" color="#666" size={10} />
          <svg width="13" height="13" viewBox="0 0 14 14"><path d="M12 7 A5 5 0 1 1 10.500 3.500" fill="none" stroke="#555" strokeWidth="1.3" /><path d="M12.500 1 V5 H8.500 Z" fill="#555" /></svg>
        </PathEnd>
        <SearchBox>
          <svg width="14" height="14" viewBox="0 0 14 14"><circle cx="8.500" cy="5.500" r="4.500" fill="none" stroke="#888" /><path d="M5 9 L1 13" stroke="#888" strokeWidth="1.3" /></svg>
          Search DVD Drive (E:) WinPESE
        </SearchBox>
      </SearchRow>
      <ExplorerBody>
        <TreePane>
          <Pin>
            <svg width="11" height="11" viewBox="0 0 11 11"><path d="M6 0 L11 5 L9 6 L7 9 L2 4 L5 2 Z M3 7 L0 11" fill="#999" stroke="#999" /></svg>
          </Pin>
          {tree.map((row, i) =>
            row ? (
              <TreeRow key={i} $indent={row.indent}>
                <TreeIcon>{row.icon}</TreeIcon>
                {row.name}
              </TreeRow>
            ) : (
              <TreeSpacer key={i} />
            ),
          )}
        </TreePane>
        <VScroll>
          <VThumb />
          <Chevron dir="down" color="#444" size={10} />
        </VScroll>
        <ListPane>
          <ColHead>
            <span />
            <span>Date modified</span>
            <span>Type</span>
            <span>Size</span>
          </ColHead>
          <FileList>
            {files.map(f => (
              <FileRow key={f.name} $sel={f.sel}>
                <RowIcon>{f.icon}</RowIcon>
                <FileName>{f.name}</FileName>
                <span>{f.date}</span>
                <span>{f.type}</span>
                <FileSize>{f.size}</FileSize>
              </FileRow>
            ))}
          </FileList>
          <HScrollBar>
            <HThumb />
            <Chevron dir="left" color="#444" size={10} />
            <Chevron dir="right" color="#444" size={10} />
          </HScrollBar>
        </ListPane>
      </ExplorerBody>
      <Status>
        <StatusPart $w={59}>8 items</StatusPart>
        <StatusPart $w={85}>1 item selected</StatusPart>
        <span>277 KB</span>
        <ViewBtns>
          <ViewBtn $on>
            <svg width="16" height="14" viewBox="0 0 16 14"><path d="M1 2 H4 M1 7 H4 M1 12 H4 M6 2 H15 M6 7 H15 M6 12 H15" stroke="#5c7d8c" strokeDasharray="2 1" /></svg>
          </ViewBtn>
          <ViewBtn>
            <PicturesIcon />
          </ViewBtn>
        </ViewBtns>
      </Status>
    </Win>

    {/* copy progress dialog */}
    <Win $l={135} $t={90} $w={449} $h={165} $z={3}>
      <TitleBar $h={28}>
        <svg width="15" height="10" viewBox="0 0 15 10"><rect y="1" width="6" height="5" fill="#3aa14a" /><rect x="6" y="2" width="3" height="3" fill="#bbb" /><path d="M8 5 H11 V2 L15 6 L11 10 V7.500 H8 Z" fill="#3a84c8" /></svg>
        93% complete
        <TitleBtns>
          <TitleBtn><MinLine $color="#222" /></TitleBtn>
          <TitleBtn><MaxBox $color="#ccc" /></TitleBtn>
          <TitleBtn><CloseX color="#222" size={11} /></TitleBtn>
        </TitleBtns>
      </TitleBar>
      <CopyBody>
        <CopyLine>
          Copying 11,958 items from <a>DVD Drive (E:) WinPESE</a> to <a>Local Disk (C:)</a>
        </CopyLine>
        <CopyHead>
          <CopyPct>93% complete</CopyPct>
          <PauseBtn><i /><i /></PauseBtn>
          <CloseX size={8} color="#111" width={2} />
        </CopyHead>
        <Progress>
          <ProgressFill style={{ width: '93%' }} />
        </Progress>
      </CopyBody>
      <Details>
        <ChevronRound><Chevron dir="down" color="#999" size={11} /></ChevronRound>
        More details
      </Details>
    </Win>

    <Cursor width="13" height="21" viewBox="0 0 13 21">
      <path d="M1 1 V17 L5 13.500 L8 20 L10.500 19 L7.500 12.500 H12.500 Z" fill="#fff" stroke="#222" />
    </Cursor>
  </Screen>
);

export default App;
